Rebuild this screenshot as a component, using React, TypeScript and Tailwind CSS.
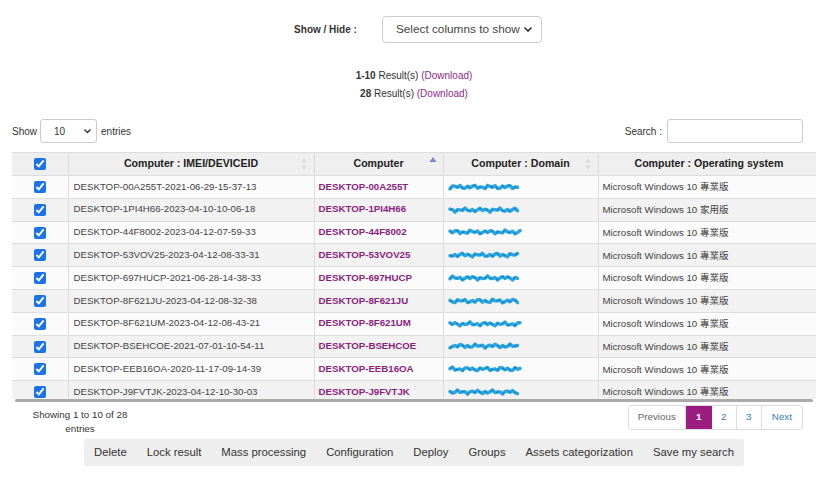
import React from "react";

const rows = [
  ["DESKTOP-00A255T-2021-06-29-15-37-13", "DESKTOP-00A255T", "專業版", 74],
  ["DESKTOP-1PI4H66-2023-04-10-10-06-18", "DESKTOP-1PI4H66", "家用版", 72],
  ["DESKTOP-44F8002-2023-04-12-07-59-33", "DESKTOP-44F8002", "專業版", 76],
  ["DESKTOP-53VOV25-2023-04-12-08-33-31", "DESKTOP-53VOV25", "專業版", 74],
  ["DESKTOP-697HUCP-2021-06-28-14-38-33", "DESKTOP-697HUCP", "專業版", 74],
  ["DESKTOP-8F621JU-2023-04-12-08-32-38", "DESKTOP-8F621JU", "專業版", 72],
  ["DESKTOP-8F621UM-2023-04-12-08-43-21", "DESKTOP-8F621UM", "專業版", 76],
  ["DESKTOP-BSEHCOE-2021-07-01-10-54-11", "DESKTOP-BSEHCOE", "專業版", 74],
  ["DESKTOP-EEB16OA-2020-11-17-09-14-39", "DESKTOP-EEB16OA", "專業版", 76],
  ["DESKTOP-J9FVTJK-2023-04-12-10-30-03", "DESKTOP-J9FVTJK", "專業版", 74],
] as const;

const actions = [
  "Delete",
  "Lock result",
  "Mass processing",
  "Configuration",
  "Deploy",
  "Groups",
  "Assets categorization",
  "Save my search",
];

function SortIcon({ active }: { active?: boolean }) {
  if (active) {
    return (
      <svg width="8" height="10" viewBox="0 0 8 10" className="absolute right-[6px] top-[3px]">
        <path d="M4 1 L7.5 6 L0.5 6 Z" fill="#8080d0" />
      </svg>
    );
  }
  return (
    <svg width="8" height="14" viewBox="0 0 8 14" className="absolute right-[6px] top-1/2 -translate-y-1/2">
      <path d="M4 1 L7 5.5 L1 5.5 Z" fill="#dcdcdc" />
      <path d="M4 13 L7 8.5 L1 8.5 Z" fill="#dcdcdc" />
    </svg>
  );
}

// blurred-out domain name
function Scribble({ w, seed }: { w: number; seed: number }) {
  const pts: string[] = [];
  for (let x = 2; x < w - 2; x += 2.5) {
    const y = 4 + Math.sin(x * 0.9 + seed) * 1.3 + Math.cos(x * 0.37 + seed * 2) * 0.8;
    pts.push(`${x.toFixed(1)} ${y.toFixed(1)}`);
  }
  return (
    <svg width={w} height="8" viewBox={`0 0 ${w} 8`} className="blur-[0.3px] block">
      <path d={`M${pts.join(" L")}`} stroke="#2aa5e0" strokeWidth="3.4" fill="none" strokeLinecap="round" strokeLinejoin="round" />
      <path d={`M${pts.join(" L")}`} stroke="#1386c8" strokeWidth="1.2" fill="none" strokeDasharray="3 4" />
    </svg>
  );
}

function Check() {
  return (
    <input
      type="checkbox"
      defaultChecked
      className="w-[12px] h-[12px] accent-[#1a73e8] align-middle m-0"
    />
  );
}

export default function App() {
  return (
    <div
      className="w-[828px] h-[485px] overflow-hidden bg-white text-[#333]"
      style={{ fontFamily: '"Liberation Sans", Arial, sans-serif' }}
    >
      {/* show / hide */}
      <div className="flex items-center justify-center pt-4 pl-[8px]">
        <span className="text-[10px] font-bold text-[#333] mr-[25px]">Show / Hide :</span>
        <div className="w-[160px] h-[27px] border border-[#ccc] rounded-[4px] flex items-center justify-between pl-[13px] pr-[8px] text-[11.8px] text-[#444] whitespace-nowrap">
          <span>Select columns to show</span>
          <svg width="10" height="7" viewBox="0 0 10 7">
            <path d="M1.5 1.5 L5 5 L8.5 1.5" stroke="#333" strokeWidth="1.6" fill="none" />
          </svg>
        </div>
      </div>

      {/* results */}
      <div className="mt-[24px] flex flex-col items-center text-[10px] leading-[18px]">
        <div>
          <b>1-10</b> Result(s) <span className="text-[#8b2a8b]">(Download)</span>
        </div>
        <div>
          <b>28</b> Result(s) <span className="text-[#8b2a8b]">(Download)</span>
        </div>
      </div>

      {/* controls */}
      <div className="mt-[16px] flex items-center justify-between pl-[12px] pr-[25px] text-[10px]">
        <div className="flex items-center">
          <span>Show</span>
          <div className="ml-[3px] w-[57px] h-[24px] border border-[#ccc] rounded-[3px] flex items-center justify-between pl-[13px] pr-[4px]">
            <span>10</span>
            <svg width="9" height="6" viewBox="0 0 9 6">
              <path d="M1.5 1.5 L4.5 4.5 L7.5 1.5" stroke="#333" strokeWidth="1.4" fill="none" />
            </svg>
          </div>
          <span className="ml-[4px]">entries</span>
        </div>
        <div className="flex items-center">
          <span className="mr-[5px]">Search :</span>
          <div className="w-[136px] h-[24px] border border-[#ccc] rounded-[3px]" />
        </div>
      </div>

      {/* table */}
      <div className="ml-[12px] mt-[9px] w-[804px]">
        <div className="h-[247px] overflow-hidden">
          <table className="w-[820px] table-fixed border-collapse text-[9.7px]">
            <colgroup>
              <col className="w-[56px]" />
              <col className="w-[246px]" />
              <col className="w-[129px]" />
              <col className="w-[155px]" />
              <col className="w-[234px]" />
            </colgroup>
            <thead>
              <tr className="bg-[#efefef] h-[23px] text-[10.6px] text-[#222]">
                <th className="border border-[#ddd] border-l-0 p-0 text-center">
                  <Check />
                </th>
                <th className="relative border border-[#ddd] p-0 text-center font-bold">
                  Computer : IMEI/DEVICEID
                  <SortIcon />
                </th>
                <th className="relative border border-[#ddd] p-0 text-center font-bold">
                  Computer
                  <SortIcon active />
                </th>
                <th className="relative border border-[#ddd] p-0 text-center font-bold">
                  Computer : Domain
                  <SortIcon />
                </th>
                <th className="relative border border-[#ddd] border-r-0 p-0 text-left pl-[36px] font-bold">
                  Computer : Operating system
                  <SortIcon />
                </th>
              </tr>
            </thead>
            <tbody>
              {rows.map(([imei, name, ed, w], i) => (
                <tr key={imei} className={`h-[22.8px] ${i % 2 ? "bg-[#f2f2f2]" : "bg-[#fbfbfb]"}`}>
                  <td className="border border-[#ddd] border-l-0 p-0 text-center">
                    <Check />
                  </td>
                  <td className="border border-[#ddd] px-[5px] py-0 text-[#444] whitespace-nowrap">{imei}</td>
                  <td className="border border-[#ddd] px-[4px] py-0 font-bold text-[#8b1f7e] whitespace-nowrap">
                    {name}
                  </td>
                  <td className="border border-[#ddd] px-[4px] py-0">
                    <Scribble w={w} seed={i * 1.7} />
                  </td>
                  <td className="border border-[#ddd] border-r-0 px-[4px] py-0 text-[#444] whitespace-nowrap">
                    Microsoft Windows 10{" "}
                    <span style={{ fontFamily: '"Noto Sans CJK TC", sans-serif' }} className="text-[9.5px]">
                      {ed}
                    </span>
                  </td>
                </tr>
              ))}
            </tbody>
          </table>
        </div>
        <div className="mx-[3px] h-[3px] bg-[#aaa] rounded-full" />
      </div>

      {/* footer row */}
      <div className="flex justify-between items-start mt-[3px] pr-[25px] pl-[28px] text-[9.8px]">
        <div className="w-[104px] text-center leading-[14px] pt-[3px] text-[#333]">
          Showing 1 to 10 of 28 entries
        </div>
        <div className="flex h-[25px] border border-[#ddd] rounded-[3px] overflow-hidden">
          <span className="px-[9px] flex items-center text-[#666] border-r border-[#ddd]">Previous</span>
          <span className="w-[26px] flex items-center justify-center bg-[#9c1c7f] text-white font-bold">1</span>
          <span className="w-[25px] flex items-center justify-center text-[#337ab7] border-r border-[#ddd]">2</span>
          <span className="w-[25px] flex items-center justify-center text-[#337ab7] border-r border-[#ddd]">3</span>
          <span className="px-[10px] flex items-center text-[#337ab7]">Next</span>
        </div>
      </div>

      {/* actions */}
      <div className="mt-[3px] mx-auto w-fit flex items-center h-[27px] bg-[#eeeeee] rounded-[3px] text-[11.3px] text-[#333]">
        {actions.map((a) => (
          <span key={a} className="px-[10px]">
            {a}
          </span>
        ))}
      </div>
    </div>
  );
}
